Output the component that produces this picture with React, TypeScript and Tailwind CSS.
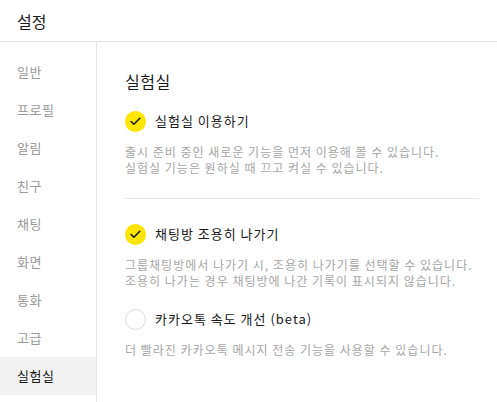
import { Check } from "lucide-react";

const menu = ["일반", "프로필", "알림", "친구", "채팅", "화면", "통화", "고급", "실험실"];

function CheckCircle({ on }: { on: boolean }) {
  if (on) {
    return (
      <span className="flex h-[21px] w-[21px] items-center justify-center rounded-full bg-[#fee500]">
        <Check className="h-[13px] w-[13px] text-[#1e1e1e]" strokeWidth={3} />
      </span>
    );
  }
  return <span className="h-[21px] w-[21px] rounded-full border border-[#dcdcdc] bg-white" />;
}

function Option({ on, label, desc }: { on: boolean; label: string; desc: string[] }) {
  return (
    <div>
      <div className="flex h-[22px] items-center gap-[9px]">
        <CheckCircle on={on} />
        <span className="text-[13px] leading-[22px] tracking-[1px] text-[#191919]">{label}</span>
      </div>
      <div className="mt-[12px] text-[12px] leading-[16px] tracking-[1px] text-[#a6a6a6]">
        {desc.map((line) => (
          <p key={line}>{line}</p>
        ))}
      </div>
    </div>
  );
}

export default function App() {
  return (
    <div
      className="h-[402px] w-[497px] overflow-hidden bg-white"
      style={{ fontFamily: '"Noto Sans CJK KR", "Noto Sans", sans-serif' }}
    >
      <header className="flex h-[42px] items-center border-b border-[#e6e6e6] pl-[17px]">
        <h1 className="text-[16px] text-[#191919]">설정</h1>
      </header>

      <div className="flex h-[360px]">
        {/* Sidebar */}
        <nav className="w-[97px] shrink-0 border-r border-[#e6e6e6] pt-[11px]">
          {menu.map((item) => (
            <div
              key={item}
              className={`flex h-[38px] items-center pl-[17px] text-[13px] tracking-[0.5px] ${
                item === "실험실" ? "bg-[#f2f2f2] text-[#191919]" : "text-[#999999]"
              }`}
            >
              {item}
            </div>
          ))}
        </nav>

        {/* Content */}
        <main className="flex-1 pl-[28px] pr-[18px] pt-[28px]">
          <h2 className="text-[16px] leading-[22px] tracking-[0.5px] text-[#191919]">실험실</h2>

          <div className="mt-[18px]">
            <Option
              on
              label="실험실 이용하기"
              desc={[
                "출시 준비 중인 새로운 기능을 먼저 이용해 볼 수 있습니다.",
                "실험실 기능은 원하실 때 끄고 켜실 수 있습니다.",
              ]}
            />
          </div>

          <div className="mt-[22px] h-px bg-[#e6e6e6]" />

          <div className="mt-[24px]">
            <Option
              on
              label="채팅방 조용히 나가기"
              desc={[
                "그룹채팅방에서 나가기 시, 조용히 나가기를 선택할 수 있습니다.",
                "조용히 나가는 경우 채팅방에 나간 기록이 표시되지 않습니다.",
              ]}
            />
          </div>

          <div className="mt-[19px]">
            <Option
              on={false}
              label="카카오톡 속도 개선 (beta)"
              desc={["더 빨라진 카카오톡 메시지 전송 기능을 사용할 수 있습니다."]}
            />
          </div>
        </main>
      </div>
    </div>
  );
}
